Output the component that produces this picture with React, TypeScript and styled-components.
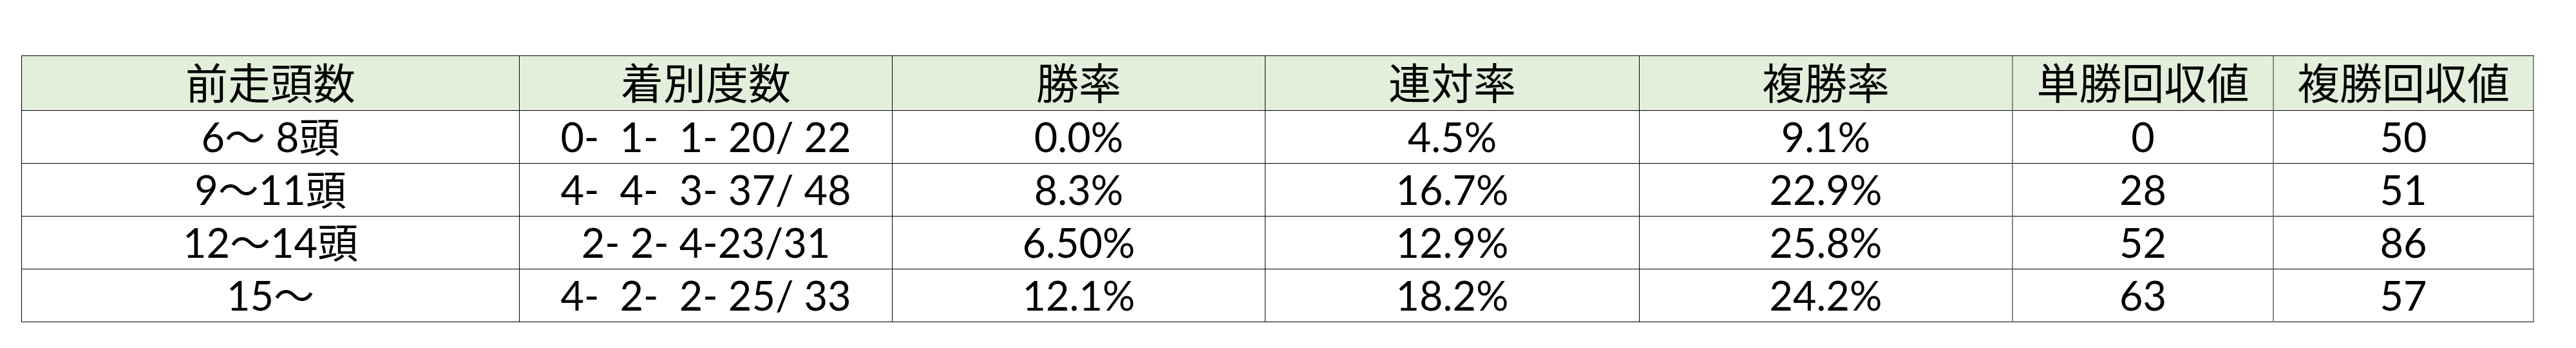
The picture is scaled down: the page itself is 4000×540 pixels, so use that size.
import styled, { createGlobalStyle } from "styled-components";

const GlobalStyle = createGlobalStyle`
  html, body {
    margin: 0;
    padding: 0;
    background: #ffffff;
  }
`;

const Page = styled.div`
  width: 4000px;
  height: 540px;
  padding: 86px 0 0 33px;
  box-sizing: border-box;
  background: #ffffff;
`;

const Grid = styled.div`
  display: grid;
  grid-template-columns: 773px 579px 579px 581px 580px 405px 404px;
  grid-template-rows: 85px repeat(4, 82px);
  width: max-content;
  border-top: 1px solid #000;
  border-left: 1px solid #000;
  font-family: Lato, "Noto Sans CJK JP", sans-serif;
  color: #000;
`;

const Cell = styled.div<{ $line: string }>`
  box-sizing: border-box;
  display: flex;
  align-items: center;
  justify-content: center;
  border-right: ${(p) => (p.$line === "gray" ? "2px solid #8a8a8a" : "1px solid #000")};
  border-bottom: 1px solid #000;
  font-size: 63px;
  line-height: 1;
  padding-bottom: 2px;
  white-space: pre;
`;

const HeadCell = styled(Cell)`
  background: #e2efda;
  font-size: 66px;
  padding-bottom: 0;
`;

const heads = ["前走頭数", "着別度数", "勝率", "連対率", "複勝率", "単勝回収値", "複勝回収値"];

const rows = [
  ["6～ 8頭", "0-  1-  1- 20/ 22", "0.0%", "4.5%", "9.1%", "0", "50"],
  ["9～11頭", "4-  4-  3- 37/ 48", "8.3%", "16.7%", "22.9%", "28", "51"],
  ["12～14頭", "2- 2- 4-23/31", "6.50%", "12.9%", "25.8%", "52", "86"],
  ["15～", "4-  2-  2- 25/ 33", "12.1%", "18.2%", "24.2%", "63", "57"],
];

const lineFor = (i: number) => (i >= 4 ? "gray" : "black");

export default function App() {
  return (
    <>
      <GlobalStyle />
      <Page>
        <Grid>
          {heads.map((h, i) => (
            <HeadCell key={h} $line={lineFor(i)}>
              {h}
            </HeadCell>
          ))}
          {rows.map((r, ri) =>
            r.map((v, i) => (
              <Cell key={ri + "-" + i} $line={lineFor(i)}>
                {v}
              </Cell>
            ))
          )}
        </Grid>
      </Page>
    </>
  );
}
